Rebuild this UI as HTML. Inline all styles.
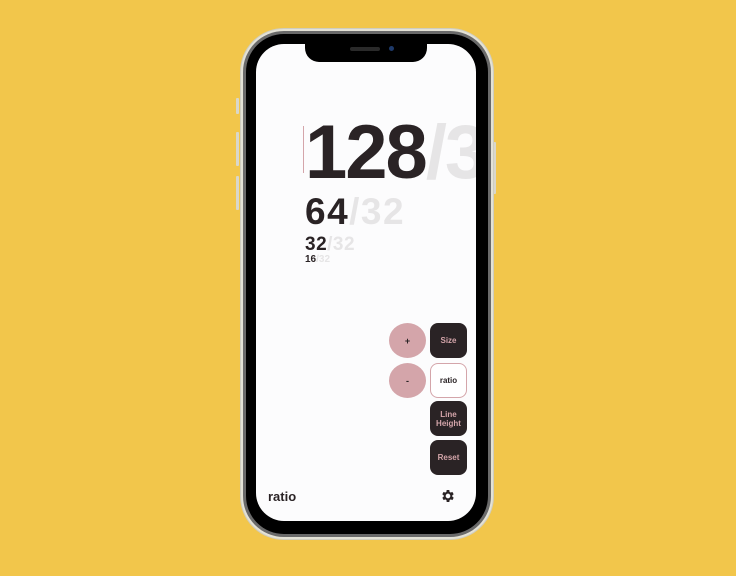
<!DOCTYPE html>
<html><head><style>
*{margin:0;padding:0;box-sizing:border-box}
body{width:736px;height:576px;background:#f2c64b;position:relative;overflow:hidden;font-family:"Liberation Sans",sans-serif}
.abs{position:absolute}
.frame{left:240px;top:28px;width:254px;height:512px;border-radius:44px;background:#e4e2d6;border:1px solid #cfcdbf}
.band{left:243px;top:31px;width:248px;height:506px;border-radius:41px;background:#6a6a6a}
.bez{left:246px;top:34px;width:242px;height:500px;border-radius:38px;background:#000}
.screen{left:256px;top:44px;width:220px;height:477px;border-radius:28px;background:#fcfcfd;overflow:hidden}
.notch{left:49px;top:-1px;width:122px;height:19px;background:#000;border-radius:0 0 14px 14px}
.t{font-weight:bold;color:#2a2325;white-space:nowrap}
.t span{color:#e6e5e6}
.btn{width:37px;height:35px;border-radius:8px;background:#2a2325;color:#d4a5aa;font-size:8px;font-weight:bold;display:flex;align-items:center;justify-content:center;text-align:center;line-height:9px}
.circ{width:37px;height:35px;border-radius:50%;background:#d4a5aa;color:#2a2325;font-size:9px;font-weight:bold;display:flex;align-items:center;justify-content:center}
.side{background:#d9d7cb;width:3px;border-radius:1px}
</style></head><body>
<div class="abs side" style="left:236px;top:98px;height:16px"></div>
<div class="abs side" style="left:236px;top:132px;height:34px"></div>
<div class="abs side" style="left:236px;top:176px;height:34px"></div>
<div class="abs side" style="left:493px;top:142px;height:52px"></div>
<div class="abs frame"></div>
<div class="abs band"></div>
<div class="abs bez"></div>
<div class="abs screen">
  <div class="abs notch">
    <div class="abs" style="left:45px;top:4px;width:30px;height:4px;border-radius:2px;background:#2a2a2a"></div>
    <div class="abs" style="left:84px;top:3px;width:5px;height:5px;border-radius:50%;background:#1e3a6a"></div>
  </div>
  <div class="abs" style="left:47px;top:82px;width:1px;height:47px;background:#d4a5aa"></div>
  <div class="abs t" style="left:49px;top:64px;font-size:76px;line-height:90px;letter-spacing:-2px">128<span>/32</span></div>
  <div class="abs t" style="left:49px;top:148px;font-size:37px;line-height:40px;letter-spacing:1.5px">64<span>/32</span></div>
  <div class="abs t" style="left:49px;top:190px;font-size:19px;line-height:22px;letter-spacing:0.5px">32<span>/32</span></div>
  <div class="abs t" style="left:49px;top:210px;font-size:10px;line-height:12px">16<span>/32</span></div>
  <div class="abs circ" style="left:133px;top:279px">+</div>
  <div class="abs btn" style="left:174px;top:279px">Size</div>
  <div class="abs circ" style="left:133px;top:319px">-</div>
  <div class="abs btn" style="left:174px;top:319px;background:#fff;border:1px solid #d4a5aa;color:#2a2325">ratio</div>
  <div class="abs btn" style="left:174px;top:357px">Line<br>Height</div>
  <div class="abs btn" style="left:174px;top:396px">Reset</div>
  <div class="abs t" style="left:12px;top:445px;font-size:13px">ratio</div>
  <svg class="abs" style="left:184px;top:444px" width="16" height="16" viewBox="0 0 24 24"><path fill="#2a2325" d="M19.4 13a7.5 7.5 0 000-2l2.1-1.6-2-3.5-2.5 1a7 7 0 00-1.7-1L15 3h-4l-.4 2.9a7 7 0 00-1.7 1l-2.5-1-2 3.5L6.6 11a7.5 7.5 0 000 2l-2.1 1.6 2 3.5 2.5-1a7 7 0 001.7 1L11 21h4l.4-2.9a7 7 0 001.7-1l2.5 1 2-3.5zM13 15.5a3.5 3.5 0 110-7 3.5 3.5 0 010 7z" transform="translate(-1 0)"/></svg>
</div>
</body></html>
